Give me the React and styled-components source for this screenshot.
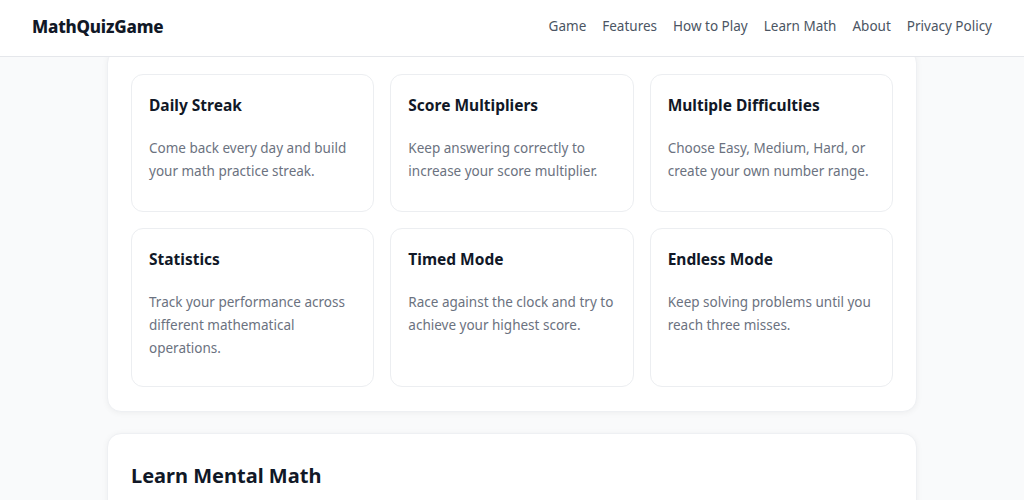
import React from 'react';
import styled, {createGlobalStyle} from 'styled-components';

const GlobalStyle = createGlobalStyle`
    html, body {
        margin: 0;
        padding: 0;
        background: #f9fafb;
        font-family: "Noto Sans", "Open Sans", sans-serif;
        color: #111827;
    }
    * {
        box-sizing: border-box;
    }
`

const Page = styled.div`
    height: 500px;
    overflow: hidden;
    display: flex;
    flex-direction: column;
`

const Header = styled.header`
    position: relative;
    z-index: 2;
    flex-shrink: 0;
    height: 57px;
    display: flex;
    align-items: center;
    justify-content: space-between;
    padding: 0 32px 4px;
    background: #ffffff;
    border-bottom: 1px solid #e5e7eb;
`

const Logo = styled.div`
    font-size: 17px;
    font-weight: 800;
    color: #111827;
    letter-spacing: -0.2px;
`

const Nav = styled.nav`
    display: flex;
    gap: 16px;
`

const NavLink = styled.a`
    font-size: 13.5px;
    color: #4b5563;
    text-decoration: none;
    cursor: pointer;
`

// content is scrolled a little, so the top of the first card sits under the header
const Content = styled.main`
    flex: 1;
    overflow: hidden;
    display: flex;
    flex-direction: column;
    align-items: center;
    gap: 21px;
    margin-top: -8px;
`

const Section = styled.section`
    width: 810px;
    background: #ffffff;
    border: 1px solid #eef0f3;
    border-radius: 14px;
    box-shadow: 0 1px 6px rgba(0, 0, 0, 0.05);
    padding: 24px 23px;
`

const Grid = styled.div`
    display: grid;
    grid-template-columns: repeat(3, 1fr);
    gap: 16px;
`

const Card = styled.div`
    border: 1px solid #eceef1;
    border-radius: 12px;
    padding: 19px 17px 24px;
    min-height: ${p => p.tall ? '159px' : '138px'};
`

const CardTitle = styled.h3`
    margin: 0 0 21px;
    font-size: 15.5px;
    font-weight: 700;
    color: #111827;
`

const CardText = styled.p`
    margin: 0;
    font-size: 13.5px;
    line-height: 23px;
    color: #6b7280;
`

const SectionTitle = styled.h2`
    margin: 4px 0 0;
    font-size: 20px;
    font-weight: 700;
    color: #111827;
`

const features = [
    {title: 'Daily Streak', text: 'Come back every day and build your math practice streak.'},
    {title: 'Score Multipliers', text: 'Keep answering correctly to increase your score multiplier.'},
    {title: 'Multiple Difficulties', text: 'Choose Easy, Medium, Hard, or create your own number range.'},
    {title: 'Statistics', text: 'Track your performance across different mathematical operations.'},
    {title: 'Timed Mode', text: 'Race against the clock and try to achieve your highest score.'},
    {title: 'Endless Mode', text: 'Keep solving problems until you reach three misses.'},
]

const links = ['Game', 'Features', 'How to Play', 'Learn Math', 'About', 'Privacy Policy']

const App = () => {
    return (
        <Page>
            <GlobalStyle />
            <Header>
                <Logo>MathQuizGame</Logo>
                <Nav>
                    {links.map(l => <NavLink key={l}>{l}</NavLink>)}
                </Nav>
            </Header>
            <Content>
                <Section>
                    <Grid>
                        {features.map((f, i) => (
                            <Card key={f.title} tall={i > 2}>
                                <CardTitle>{f.title}</CardTitle>
                                <CardText>{f.text}</CardText>
                            </Card>
                        ))}
                    </Grid>
                </Section>
                <Section>
                    <SectionTitle>Learn Mental Math</SectionTitle>
                </Section>
            </Content>
        </Page>
    )
}

export default App
